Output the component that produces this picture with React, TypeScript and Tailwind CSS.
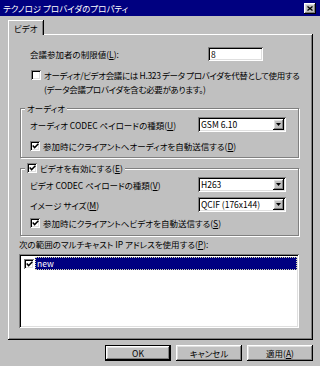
import type { ReactNode } from 'react';

// classic win32 bevels
const raised = 'shadow-[inset_-1px_-1px_0_#000,inset_1px_1px_0_#fff,inset_-2px_-2px_0_#808080,inset_2px_2px_0_#dfdfdf]';
const sunken = 'shadow-[inset_1px_1px_0_#808080,inset_-1px_-1px_0_#fff,inset_2px_2px_0_#000,inset_-2px_-2px_0_#dfdfdf]';
const panel = 'shadow-[inset_-1px_-1px_0_#000,inset_1px_1px_0_#fff,inset_-2px_-2px_0_#808080]';

function Check({ on }: { on?: boolean }) {
  return (
    <span className={`w-[10px] h-[10px] shrink-0 bg-white flex items-center justify-center ${sunken}`}>
      {on && (
        <svg width="7" height="6" viewBox="0 0 7 6">
          <path d="M0.7 2.6 L2.6 4.6 L6.4 0.8" stroke="#000" strokeWidth="1.5" fill="none" />
        </svg>
      )}
    </span>
  );
}

function Combo({ value }: { value: string }) {
  return (
    <div className={`w-[88px] h-[15px] bg-white flex p-[2px] ${sunken}`}>
      <span className="flex-1 pl-[1px] leading-[11px]">{value}</span>
      <span className={`w-[11px] bg-[#c0c0c0] flex items-center justify-center ${raised}`}>
        <svg width="5" height="3" viewBox="0 0 5 3">
          <path d="M0 0h5L2.5 3z" fill="#000" />
        </svg>
      </span>
    </div>
  );
}

function Group({ label, children, className }: { label: ReactNode; children: ReactNode; className: string }) {
  return (
    <div className={`relative w-[279px] border border-[#808080] shadow-[inset_1px_1px_0_#fff,1px_1px_0_#fff] ${className}`}>
      <div className="absolute -top-[8px] left-[4px] h-[14px] px-[2px] bg-[#c0c0c0] flex items-center gap-[3px]">
        {label}
      </div>
      {children}
    </div>
  );
}

function Btn({ children, def }: { children: ReactNode; def?: boolean }) {
  return (
    <div className={`w-[66px] h-[16px] ${def ? 'border border-black' : ''}`}>
      <div className={`w-full h-full bg-[#c0c0c0] flex items-center justify-center ${raised}`}>{children}</div>
    </div>
  );
}

export default function App() {
  return (
    <div className="w-[320px] h-[366px] bg-[#c0c0c0] text-black text-[8.5px] leading-[14px] whitespace-nowrap font-['Noto_Sans_CJK_JP',sans-serif] [font-feature-settings:'palt'] overflow-hidden">
      {/* title bar */}
      <div className="h-[16px] bg-[#000080] flex items-center pl-[3px] pr-[4px]">
        <span className="text-white flex-1">テクノロジ プロバイダのプロパティ</span>
        <div className={`w-[12px] h-[11px] bg-[#c0c0c0] flex items-center justify-center ${raised}`}>
          <svg width="6" height="5" viewBox="0 0 6 5">
            <path d="M0.5 0.5 L5.5 4.5 M5.5 0.5 L0.5 4.5" stroke="#000" strokeWidth="1.3" />
          </svg>
        </div>
      </div>

      <div className="pl-[8px] pt-[4px]">
        {/* tab */}
        <div className="relative z-10 w-[35px] h-[15px] bg-[#c0c0c0] border-l border-t border-white shadow-[inset_-1px_0_0_#808080,1px_0_0_#000] flex items-center pl-[5px]">
          ビデオ
        </div>

        {/* tab panel */}
        <div className={`-mt-px w-[305px] h-[306px] ${panel}`}>
          <div className="flex items-center pt-[13px] pl-[22px] h-[27px]">
            <span className="w-[178px]">
              会議参加者の制限値(<u>L</u>):
            </span>
            <div className={`w-[55px] h-[14px] bg-white pl-[3px] leading-[14px] ${sunken}`}>8</div>
          </div>

          <div className="flex gap-[3px] pl-[23px] mt-[7px]">
            <div className="h-[14px] flex items-center">
              <Check />
            </div>
            <div className="tracking-[-0.35px]">
              <div>オーディオ/ビデオ会議には H.323 データ プロバイダを代替として使用する</div>
              <div>(データ会議プロバイダを含む必要があります。)</div>
            </div>
          </div>

          <div className="pl-[12px]">
            <Group label={<span>オーディオ</span>} className="mt-[12px] h-[50px] pt-[8px]">
              <div className="flex items-center pl-[9px] h-[15px]">
                <span className="w-[168px]">
                  オーディオ CODEC ペイロードの種類(<u>U</u>)
                </span>
                <Combo value="GSM 6.10" />
              </div>
              <div className="flex items-center gap-[3px] pl-[9px] h-[14px] mt-[7px]">
                <Check on />
                <span>
                  参加時にクライアントへオーディオを自動送信する(<u>D</u>)
                </span>
              </div>
            </Group>

            <Group
              label={
                <>
                  <Check on />
                  <span>
                    ビデオを有効にする(<u>E</u>)
                  </span>
                </>
              }
              className="mt-[10px] h-[68px] pt-[8px]"
            >
              <div className="flex items-center pl-[9px] h-[15px]">
                <span className="w-[168px]">
                  ビデオ CODEC ペイロードの種類(<u>V</u>)
                </span>
                <Combo value="H263" />
              </div>
              <div className="flex items-center pl-[9px] h-[15px] mt-[5px]">
                <span className="w-[168px]">
                  イメージ サイズ(<u>M</u>)
                </span>
                <Combo value="QCIF (176x144)" />
              </div>
              <div className="flex items-center gap-[3px] pl-[9px] h-[14px] mt-[4px]">
                <Check on />
                <span>
                  参加時にクライアントへビデオを自動送信する(<u>S</u>)
                </span>
              </div>
            </Group>
          </div>

          <div className="pl-[11px] mt-[1px]">
            次の範囲のマルチキャスト IP アドレスを使用する(<u>P</u>):
          </div>

          <div className={`ml-[11px] mt-[3px] w-[280px] h-[74px] bg-white p-[2px] ${sunken}`}>
            <div className="flex items-center h-[13px] mt-px pl-[3px] gap-[1px]">
              <Check on />
              <div className="flex-1 h-full bg-[#000080] border border-dotted border-[#d8d8a8] text-white leading-[11px] pl-[1px]">
                new
              </div>
            </div>
          </div>
        </div>
      </div>

      {/* buttons */}
      <div className="flex justify-end gap-[5px] pr-[7px] mt-[5px]">
        <Btn def>OK</Btn>
        <Btn>キャンセル</Btn>
        <Btn>
          <span>
            適用(<u>A</u>)
          </span>
        </Btn>
      </div>
    </div>
  );
}
